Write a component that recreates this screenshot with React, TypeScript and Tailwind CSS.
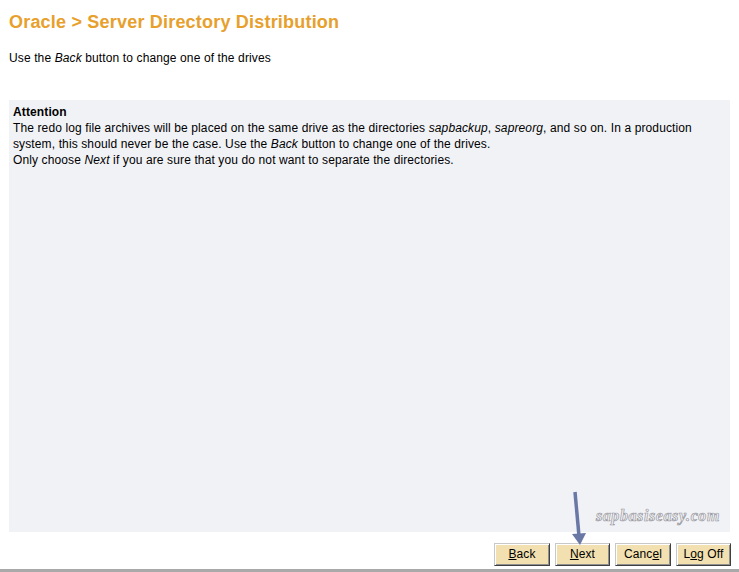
export default function App() {
  const buttons = [
    { pre: '', u: 'B', post: 'ack', w: 'w-[56px]' },
    { pre: '', u: 'N', post: 'ext', w: 'w-[55px]' },
    { pre: 'Canc', u: 'e', post: 'l', w: 'w-[56px]' },
    { pre: 'L', u: 'o', post: 'g Off', w: 'w-[55px]' },
  ];

  return (
    <div className="w-[739px] h-[572px] bg-white flex flex-col font-['Liberation_Sans',Arial,sans-serif] text-[12px] tracking-[0.12px] text-black relative">
      <h1 className="px-[9px] pt-[11px] text-[18px] leading-[22px] font-bold tracking-[0.2px] text-[#e8a02c]">
        Oracle &gt; Server Directory Distribution
      </h1>
      <p className="px-[9px] mt-[17px] leading-[16px]">
        Use the <i>Back</i> button to change one of the drives
      </p>

      <div className="mx-[9px] mt-[34px] h-[432px] bg-[#f1f2f6] px-[4px] pt-[4px] leading-[16px] relative">
        <div className="font-bold">Attention</div>
        <div>
          The redo log file archives will be placed on the same drive as the directories <i>sapbackup</i>,{' '}
          <i>sapreorg</i>, and so on. In a production system, this should never be the case. Use the{' '}
          <i>Back</i> button to change one of the drives.
        </div>
        <div>
          Only choose <i>Next</i> if you are sure that you do not want to separate the directories.
        </div>
        <div className="absolute right-[10px] bottom-[8px] font-['Liberation_Serif',serif] italic font-bold text-[16px] text-[#f4f4f6] [-webkit-text-stroke:0.7px_#9a9aa2] tracking-[0.6px]">
          sapbasiseasy.com
        </div>
      </div>

      <div className="flex justify-end gap-[5px] pr-[8px] mt-[11px]">
        {buttons.map((b) => (
          <button
            key={b.u + b.post}
            className={`${b.w} h-[23px] bg-[#f2e0b0] border border-t-[#c8c8c8] border-l-[#c8c8c8] border-r-[#404040] border-b-[#404040] shadow-[inset_1px_1px_0_#ffffff,inset_-1px_-1px_0_#909090] text-[12px] leading-[19px] text-black`}
          >
            {b.pre}
            <span className="underline">{b.u}</span>
            {b.post}
          </button>
        ))}
      </div>

      <div className="mt-auto h-[3px] bg-[#a9a9a9]" />

      <svg className="absolute left-[568px] top-[490px]" width="20" height="58" viewBox="0 0 20 58">
        <line x1="7" y1="2" x2="11" y2="46" stroke="#6a78a6" strokeWidth="3.5" />
        <polygon points="4,44 18,43 12,55" fill="#6a78a6" />
      </svg>
    </div>
  );
}
